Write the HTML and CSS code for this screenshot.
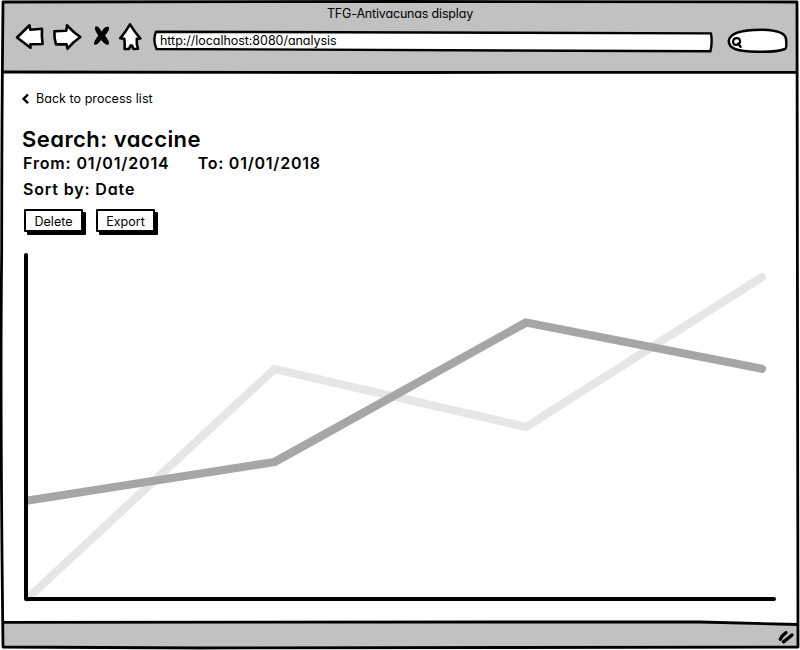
FILE: index.html
```html
<!DOCTYPE html>
<html lang="en">
<head>
<meta charset="utf-8">
<title>TFG-Antivacunas display</title>
<link rel="stylesheet" href="styles.css">
</head>
<body>
<div class="window">
  <header class="chrome">
    <div class="window-title"><span>TFG-Antivacunas display</span></div>
    <div class="toolbar">
      <svg class="nav-icons" viewBox="12 20 134 34" width="134" height="34">
        <g fill="#fff" stroke="#000" stroke-width="2.6" stroke-linejoin="round" stroke-linecap="round">
          <path d="M17 37.5L29.5 25.3L30.3 29.7L42 28.8Q41.5 36 42.6 44L30.4 44.2L30.5 47.8Q23 42 17 37.5Z"/>
          <path d="M54.4 31.2L66.3 30.7L67 25.4Q73 32 80.3 37Q73 42 67.5 48.8L66.6 44.2L56 44.4Q54 38 54.4 31.2Z"/>
          <path d="M130 24.3Q134 31 140.3 38.5L136.8 38.8Q136.3 44 138 48.8L133.5 49L132 45.6L130.5 45.6L129 49L124.6 49Q125 44 124.3 38.8L120.2 38.3Q125.5 32 130 24.3Z"/>
        </g>
        <path d="M95.500 26.500Q98 25.300 101.500 31.500Q105 25.500 108.700 27Q110.500 29 105 35.500Q109.800 41.500 108.800 44.300Q106 46 101 40Q97 46 94 44.300Q93.300 42 98.300 35.500Q93.500 29 95.500 26.500Z"/>
      </svg>
      <div class="address">
        <svg viewBox="153 30 561 23" width="561" height="23"><path d="M156 31.700Q430 31.800 711 33.400Q712.500 42 710.500 51.300Q440 50.300 156.500 49Q152.500 40 156 31.700Z" fill="#fff" stroke="#000" stroke-width="2.400" stroke-linejoin="round"/></svg>
        <span class="url">http://localhost:8080/analysis</span>
      </div>
      <svg class="search" viewBox="726 27 64 27" width="64" height="27">
        <path d="M728.800 41Q730 29.500 763 29.800Q785 30.500 786 39Q787 48 785 49Q776 52.300 757 51.700C738 51.300 728.500 49 728.800 41Z" fill="#fff" stroke="#000" stroke-width="2.500"/>
        <path d="M734 39Q736 37.500 739 38.500Q741.500 42.500 738.500 44.300Q735 46 733.300 43.300Q732.600 40.800 734 39M738 43.500L740.700 47" fill="none" stroke="#000" stroke-width="2.200" stroke-linecap="round"/>
      </svg>
    </div>
  </header>

  <main class="page">
    <a class="back"><svg width="10" height="12" viewBox="0 0 10 12"><path d="M8 1.500L3.500 5.800L8 10.200" fill="none" stroke="#000" stroke-width="2.400"/></svg><span>Back to process list</span></a>
    <h1><span>Search: vaccine</span></h1>
    <div class="range"><span class="from">From: 01/01/2014</span><span class="to">To: 01/01/2018</span></div>
    <div class="sort"><span>Sort by: Date</span></div>
    <div class="actions">
      <button class="sketch-button"><span>Delete</span></button>
      <button class="sketch-button"><span>Export</span></button>
    </div>
    <svg class="chart" viewBox="20 250 760 354" width="760" height="354">
      <g fill="none" stroke-linejoin="round" stroke-linecap="round">
        <g stroke-width="8.300">
          <path stroke="#e6e6e6" d="M28 598L274.500 369L526 427L762 277"/>
          <path stroke="#a6a6a6" d="M28 500.500L274.500 462L526 322.500L762 368.800"/>
        </g>
        <path stroke="#000" stroke-width="4" d="M26 255V599H774"/>
      </g>
    </svg>
  </main>

  <footer class="status">
    <svg viewBox="776 628 20 18" width="20" height="18"><path d="M780.300 639.300Q782 635.500 786 632.700M783.500 641.800Q788 638.500 792 635" fill="none" stroke="#000" stroke-width="3.400" stroke-linecap="round"/></svg>
  </footer>

  <svg class="frame" viewBox="0 0 800 650" width="800" height="650">
    <path class="surround" d="M0 0H800V650H0ZM3 2L2 110L1.500 250L2 646.500L400 647.500L798.500 647L797 2Z"/>
    <path class="edge" d="M3 2Q400 1 797 2Q797.500 300 798 647Q500 647.500 200 648L3 647Q0 400 1.700 250Q1.700 120 3 2Z"/>
    <path class="edge" d="M3 72Q180 73 400 72.500T797 72.300M3 622.300Q300 623 500 622L700 622L797 624.500"/>
  </svg>
</div>
</body>
</html>
```
FILE: styles.css
```css
* { box-sizing: border-box; }
body {
  margin: 0;
  background: #fff;
  color: #000;
  font-family: Inter, Lato, sans-serif;
  font-feature-settings: "cv11";
  font-size: 12.5px;
}
.window {
  position: relative;
  width: 800px;
  height: 650px;
  display: flex;
  flex-direction: column;
  overflow: hidden;
}
.chrome { height: 72px; background: #c1c1c1; }
.window-title {
  height: 20px;
  padding-top: 6px;
  line-height: 16px;
  text-align: center;
  letter-spacing: -0.17px;
}
.toolbar { display: flex; align-items: flex-start; padding-left: 12px; }
.address { position: relative; margin: 10px 0 0 7px; height: 23px; }
.address svg { display: block; }
.url { position: absolute; left: 7px; top: 3px; line-height: 16px; letter-spacing: -0.04px; }
.search { margin: 7px 0 0 12px; }
.page {
  height: 551px;
  padding: 18px 20px 0;
  display: flex;
  flex-direction: column;
}
.back { display: flex; align-items: center; gap: 6px; height: 17px; letter-spacing: 0.04px; }
h1 {
  margin: 17px 0 0 2px;
  height: 28px;
  line-height: 31px;
  font-size: 22px;
  font-weight: 600;
  letter-spacing: 0.45px;
}
.range, .sort { margin-left: 3px; font-size: 16px; font-weight: 600; white-space: nowrap; letter-spacing: 0.85px; }
.range { height: 22px; margin-top: 1px; display: flex; gap: 28px; line-height: 21px; }
.to { letter-spacing: 0.76px; }
.sort { height: 25px; margin-top: 2px; line-height: 25px; }
.actions { display: flex; gap: 13px; margin: 7px 0 0 4px; height: 25px; }
.sketch-button {
  width: 59px;
  height: 23px;
  margin: 0;
  padding: 2px 0 0;
  background: #fff;
  border: 2px solid #000;
  border-radius: 1px;
  box-shadow: 3px 3px 0 #000;
  color: #000;
  font: inherit;
  font-feature-settings: inherit;
  line-height: 17px;
}
.chart { display: block; margin-top: 16px; flex: none; }
.status { flex: 1; background: #c1c1c1; display: flex; justify-content: flex-end; padding: 5px 4px 0 0; }
.frame { position: absolute; inset: 0; pointer-events: none; }
.surround { fill: #fff; fill-rule: evenodd; }
.edge { fill: none; stroke: #000; stroke-width: 2.800; stroke-linejoin: round; }
```
